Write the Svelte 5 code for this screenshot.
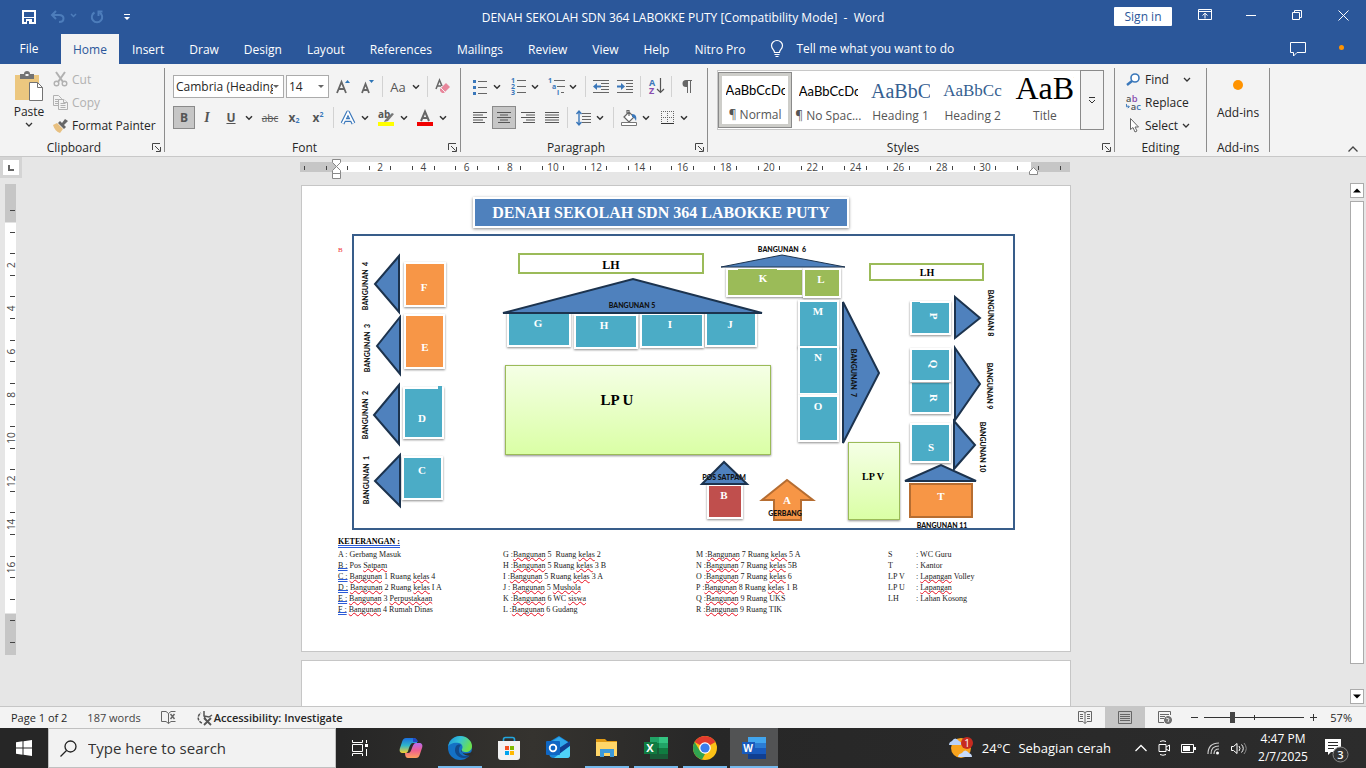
<script lang="ts">
    type Segment = { kind: string; text: string }
    type Building = {
        name: string
        x: number
        y: number
        w: number
        h: number
        fill: string
        lx: number
        ly: number
        turn?: boolean
    }

    const tabs = ['Home', 'Insert', 'Draw', 'Design', 'Layout', 'References', 'Mailings', 'Review', 'View', 'Help', 'Nitro Pro']
    let activeTab = $state('Home')
    let font = $state('Cambria (Headings)')
    let size = $state('14')
    let query = $state('')
    let zoom = $state(27)

    const styles = [
        { name: '¶ Normal', sample: 'AaBbCcDc', look: 'body' },
        { name: '¶ No Spac...', sample: 'AaBbCcDc', look: 'body' },
        { name: 'Heading 1', sample: 'AaBbCc', look: 'h-one' },
        { name: 'Heading 2', sample: 'AaBbCcD', look: 'h-two' },
        { name: 'Title', sample: 'AaBb', look: 'title' },
    ]
    let activeStyle = $state('¶ Normal')

    const teal = '#4bacc6'
    const orange = '#f79646'
    const green = '#9bbb59'

    const buildings: Building[] = [
        { name: 'F', x: 406, y: 264, w: 38, h: 41, fill: orange, lx: 424, ly: 291 },
        { name: 'E', x: 406, y: 316, w: 37, h: 51, fill: orange, lx: 425, ly: 351 },
        { name: 'D', x: 405, y: 389, w: 37, h: 48, fill: teal, lx: 422, ly: 422 },
        { name: 'C', x: 404, y: 458, w: 37, h: 40, fill: teal, lx: 422, ly: 474 },
        { name: 'G', x: 509, y: 314, w: 60, h: 31, fill: teal, lx: 538, ly: 327 },
        { name: 'H', x: 576, y: 316, w: 60, h: 31, fill: teal, lx: 604, ly: 329 },
        { name: 'I', x: 642, y: 315, w: 60, h: 31, fill: teal, lx: 670, ly: 328 },
        { name: 'J', x: 707, y: 314, w: 48, h: 31, fill: teal, lx: 730, ly: 328 },
        { name: 'K', x: 728, y: 270, w: 74, h: 25, fill: green, lx: 763, ly: 282 },
        { name: 'L', x: 805, y: 270, w: 34, h: 26, fill: green, lx: 821, ly: 283 },
        { name: 'M', x: 800, y: 302, w: 37, h: 44, fill: teal, lx: 818, ly: 315 },
        { name: 'N', x: 800, y: 348, w: 37, h: 45, fill: teal, lx: 818, ly: 361 },
        { name: 'O', x: 800, y: 397, w: 37, h: 43, fill: teal, lx: 818, ly: 410 },
        { name: 'P', x: 912, y: 303, w: 37, h: 30, fill: teal, lx: 930, ly: 316, turn: true },
        { name: 'R', x: 912, y: 383, w: 37, h: 29, fill: teal, lx: 930, ly: 398, turn: true },
        { name: 'Q', x: 912, y: 350, w: 37, h: 30, fill: teal, lx: 930, ly: 364, turn: true },
        { name: 'S', x: 912, y: 425, w: 37, h: 36, fill: teal, lx: 931, ly: 451 },
        { name: 'B', x: 709, y: 486, w: 32, h: 31, fill: '#c0504d', lx: 724, ly: 499 },
    ]

    const roofs = [
        '399,256 375,284 399,312',
        '400,317 377,346 400,374',
        '399,385 374,415 399,444',
        '400,455 375,481 400,506',
        '503,313 633,279 762,313',
        '843,302 879,373 843,443',
        '955,297 980,318 955,338',
        '955,348 980,384 955,420',
        '954,421 975,445 954,469',
        '905,481 941,465 976,481',
        '702,484 724,462 747,484',
    ]

    const labels = [
        { text: 'BANGUNAN  4', x: 366, y: 286, turn: -90 },
        { text: 'BANGUNAN  3', x: 368, y: 348, turn: -90 },
        { text: 'BANGUNAN  2', x: 366, y: 415, turn: -90 },
        { text: 'BANGUNAN  1', x: 367, y: 480, turn: -90 },
        { text: 'BANGUNAN 5', x: 632, y: 306, turn: 0 },
        { text: 'BANGUNAN  6', x: 782, y: 250, turn: 0 },
        { text: 'BANGUNAN  7', x: 853, y: 373, turn: 90 },
        { text: 'BANGUNAN 8', x: 990, y: 313, turn: 90 },
        { text: 'BANGUNAN 9', x: 989, y: 386, turn: 90 },
        { text: 'BANGUNAN 10', x: 982, y: 447, turn: 90 },
        { text: 'BANGUNAN 11', x: 942, y: 526, turn: 0 },
        { text: 'POS SATPAM', x: 724, y: 478, turn: 0 },
        { text: 'GERBANG', x: 785, y: 514, turn: 0 },
    ]

    // *word* is a spelling mark, _word_ is a grammar mark
    const legend = [
        [
            'A : Gerbang Masuk',
            '_B :_ Pos *Satpam*',
            '_C :_ *Bangunan* 1 Ruang *kelas* 4',
            '_D :_ *Bangunan* 2 Ruang *kelas* I A',
            '_E :_ *Bangunan* 3 *Perpustakaan*',
            '_F :_ *Bangunan* 4 Rumah Dinas',
        ],
        [
            'G :*Bangunan* 5  Ruang *kelas* 2',
            'H :*Bangunan* 5 Ruang *kelas* 3 B',
            'I :*Bangunan* 5 Ruang *kelas* 3 A',
            'J : *Bangunan* 5 *Mushola*',
            'K :*Bangunan* 6 WC *siswa*',
            'L :*Bangunan* 6 Gudang',
        ],
        [
            'M :*Bangunan* 7 Ruang *kelas* 5 A',
            'N :*Bangunan* 7 Ruang *kelas* 5B',
            'O :*Bangunan* 7 Ruang *kelas* 6',
            'P :*Bangunan* 8 Ruang *kelas* 1 B',
            'Q :*Bangunan* 9 Ruang UKS',
            'R :*Bangunan* 9 Ruang TIK',
        ],
        ['S\t: WC Guru', 'T\t: Kantor', 'LP V\t: *Lapangan* Volley', 'LP U\t: *Lapangan*', 'LH\t: Lahan Kosong'],
    ]

    function segments(line: string): Segment[] {
        return line
            .split(/(\*[^*]+\*|_[^_]+_)/)
            .filter(Boolean)
            .map((s) => {
                if (s[0] === '*') return { kind: 'typo', text: s.slice(1, -1) }
                if (s[0] === '_') return { kind: 'grammar', text: s.slice(1, -1) }
                return { kind: 'plain', text: s }
            })
    }

    const hTicks = Array.from({ length: 36 }, (_, i) => Math.round(4 + i * 21.6))
    const hNumbers = Array.from({ length: 15 }, (_, i) => ({ n: (i + 1) * 2, x: 37 + (i + 1) * 43.2 }))
    const vTicks = Array.from({ length: 21 }, (_, i) => Math.round(26 + i * 21.6))
    const vNumbers = Array.from({ length: 8 }, (_, i) => ({ n: (i + 1) * 2, y: 38 + (i + 1) * 43.2 }))
</script>

{#snippet chevron(label: string)}
    <button class="chev" aria-label={label}>
        <svg width="8" height="6" viewBox="0 0 8 6"><path d="M1 1.2 4 4.2 7 1.2" fill="none" stroke="#333" stroke-width="1.5" /></svg>
    </button>
{/snippet}

{#snippet launcher(label: string)}
    <button class="launcher" aria-label={label}>
        <svg width="9" height="9" viewBox="0 0 9 9" fill="none" stroke="#444"><path d="M.5 7V.5H8M3 3l4.5 4.5M8.5 4v4.500H4" /></svg>
    </button>
{/snippet}

<div class="window">
    <header class="titlebar">
        <div class="quick">
            <button aria-label="Save">
                <svg width="14" height="14" viewBox="0 0 14 14"><path d="M1 1h12v12H1z" fill="none" stroke="#fff" stroke-width="2" /><path d="M1 7h12v1H1zM4 9h6v5H4z" fill="#fff" /><path d="M5 11h2v3H5z" fill="#2b579a" /></svg>
            </button>
            <button aria-label="Undo">
                <svg width="26" height="14" viewBox="0 0 26 14" fill="none" stroke="#4d7dbb" stroke-width="2"><path d="M6 1 2 5l4 4M2 5h7c6 0 6 7 0 7" /><path d="m21 4 2.500 2.500L26 4" stroke-width="1.500" /></svg>
            </button>
            <button aria-label="Repeat">
                <svg width="14" height="14" viewBox="0 0 14 14" fill="none" stroke="#4d7dbb" stroke-width="2"><path d="M4.500 2.500a5.200 5.200 0 1 0 5 0" /><path d="M12.500 1.500H8.500V6" /></svg>
            </button>
            <button aria-label="Customize Quick Access Toolbar">
                <svg width="6" height="7" viewBox="0 0 6 7" fill="#fff"><path d="M0 0h6v1H0zM0 3h6L3 6z" /></svg>
            </button>
        </div>
        <div class="doc-name">DENAH SEKOLAH SDN 364 LABOKKE PUTY [Compatibility Mode]&nbsp; -&nbsp; Word</div>
        <div class="controls">
            <button class="signin">Sign in</button>
            <button class="win" aria-label="Ribbon display options">
                <svg width="14" height="12" viewBox="0 0 14 12" fill="none" stroke="#fff"><path d="M.5.5h13v10H.5zM.5 2.500h13M7 9.500V4.500M4.500 6.500 7 4.200l2.500 2.300" /></svg>
            </button>
            <button class="win" aria-label="Minimize">
                <svg width="10" height="10" viewBox="0 0 10 10"><path d="M0 5h10v1H0z" fill="#fff" /></svg>
            </button>
            <button class="win" aria-label="Restore">
                <svg width="10" height="10" viewBox="0 0 10 10" fill="none" stroke="#fff"><path d="M.5 2.500h7v7h-7zM2.500 2V.5h7v7H8" /></svg>
            </button>
            <button class="win" aria-label="Close">
                <svg width="11" height="11" viewBox="0 0 11 11" stroke="#fff"><path d="m.5.5 10 10M10.500.5l-10 10" /></svg>
            </button>
        </div>
    </header>

    <nav class="tabs">
        <button class="file">File</button>
        {#each tabs as tab}
            <button class:active={activeTab === tab} onclick={() => (activeTab = tab)}>{tab}</button>
        {/each}
        <button class="tell">
            <svg width="14" height="18" viewBox="0 0 14 18" fill="none" stroke="#fff" stroke-width="1.200"><path d="M4.500 12.500c0-3-3-3.500-3-7a5.500 5 0 0 1 11 0c0 3.500-3 4-3 7zM4.500 14.500h5M5.500 16.500h3" /></svg>
            Tell me what you want to do
        </button>
        <button class="comments" aria-label="Comments">
            <svg width="16" height="15" viewBox="0 0 16 15" fill="none" stroke="#fff"><path d="M.5.5h15v10H7L3.500 14v-3.500h-3z" /></svg>
        </button>
        <span class="notice"></span>
    </nav>

    <section class="ribbon">
        <div class="group clipboard">
            <div class="tools split">
                <button class="paste">
                    <svg width="28" height="31" viewBox="0 0 28 31"><path d="M0 4h24v25H0z" fill="#ecc77f" /><path d="M5 3h4a3 3 0 0 1 6 0h4v5H5z" fill="#737373" /><path d="M10.500 3h3v2h-3z" fill="#f3f3f3" /><path d="M14.500 11.500h8l5 5v13h-13z" fill="#fff" stroke="#737373" /><path d="M22.500 11.500v5h5" fill="none" stroke="#737373" /></svg>
                    Paste
                    <svg width="8" height="6" viewBox="0 0 8 6"><path d="m1 1 3 3 3-3" fill="none" stroke="#333" stroke-width="1.300" /></svg>
                </button>
                <div class="stack">
                    <button class="small off">
                        <svg width="15" height="15" viewBox="0 0 15 15" fill="none" stroke="#b1b1b1" stroke-width="2"><path d="m3 0 7 10M12 0 5 10" /><circle cx="3.500" cy="11.500" r="2.300" stroke-width="1.400" /><circle cx="11.500" cy="11.500" r="2.300" stroke-width="1.400" /></svg>Cut
                    </button>
                    <button class="small off">
                        <svg width="15" height="15" viewBox="0 0 15 15" fill="#f3f3f3" stroke="#b1b1b1"><path d="M.5.500h5l3 3v7h-8z" /><path d="M2 4.500h4M2 6.500h3M2 8.500h3" /><path d="M5.500 4.500h5l4 3v7h-9z" /><path d="M7.500 8.500h5M7.500 10.500h5M7.500 12.500h5M10.500 4.500v3h4" /></svg>Copy
                    </button>
                    <button class="small">
                        <svg width="15" height="14" viewBox="0 0 15 14"><path d="m0 6 4-2 6 6-3 4c-3-1-6-4-7-8z" fill="#e8c080" /><path d="m5 4 2-2 2 2 3-4 3 2-4 4 2 2-2 2z" fill="#666" /></svg>Format Painter
                    </button>
                </div>
            </div>
            <div class="caption">Clipboard</div>
            {@render launcher('Clipboard settings')}
        </div>

        <div class="group font">
            <div class="tools rows">
                <div class="row">
                    <span class="combo name">
                        <select aria-label="Font" bind:value={font}>
                            <option>Cambria (Headings)</option>
                            <option>Calibri</option>
                        </select>
                    </span>
                    <span class="combo size">
                        <select aria-label="Font size" bind:value={size}>
                            <option>12</option>
                            <option>14</option>
                            <option>16</option>
                        </select>
                    </span>
                    <button class="tool" aria-label="Increase font size">
                        <svg width="14" height="15" viewBox="0 0 14 15"><path d="M1 14 5.500 3 10 14M2.500 10h6" fill="none" stroke="#666" stroke-width="1.800" /><path d="M9 4h5l-2.500-3z" fill="#2e75b6" /></svg>
                    </button>
                    <button class="tool" aria-label="Decrease font size">
                        <svg width="14" height="15" viewBox="0 0 14 15"><path d="M2 14 5.500 5 9 14M3 11h5" fill="none" stroke="#666" stroke-width="1.800" /><path d="M9 1h5l-2.500 3z" fill="#2e75b6" /></svg>
                    </button>
                    <i class="bar"></i>
                    <button class="tool case">Aa</button>
                    {@render chevron('Change case')}
                    <i class="bar late"></i>
                    <button class="tool" aria-label="Clear formatting">
                        <svg width="16" height="16" viewBox="0 0 16 16"><path d="M1 10 4.500 1 7 7M2.500 7H6" fill="none" stroke="#666" stroke-width="1.500" /><path d="m5 10 6-6 4 4-6 6H7l-2-2z" fill="#e8879c" /><path d="m6 9 4 4" stroke="#f3f3f3" /></svg>
                    </button>
                </div>
                <div class="row">
                    <button class="tool on bold">B</button>
                    <button class="tool italic">I</button>
                    <button class="tool under">U</button>
                    {@render chevron('Underline options')}
                    <button class="tool strike">abc</button>
                    <button class="tool script">x<sub>2</sub></button>
                    <button class="tool script">x<sup>2</sup></button>
                    <i class="bar"></i>
                    <button class="tool tight" aria-label="Text effects">
                        <svg width="16" height="16" viewBox="0 0 16 16"><path d="M2.500 13.500 8 2.500 13.500 13.500M4.500 10h7" fill="none" stroke="#3a77ba" stroke-width="4" stroke-linejoin="round" /><path d="M2.500 13.500 8 2.500 13.500 13.500M4.500 10h7" fill="none" stroke="#fff" stroke-width="1.700" /></svg>
                    </button>
                    {@render chevron('Text effect options')}
                    <button class="tool" aria-label="Text highlight color">
                        <svg width="16" height="16" viewBox="0 0 16 16"><text x="0" y="8" font-size="10" font-weight="700" fill="#555">ab</text><path d="m7 10 7-7 2 1-6 7-4 1z" fill="#777" /><path d="M0 12h16v4H0z" fill="#ff0" /></svg>
                    </button>
                    {@render chevron('Highlight colors')}
                    <button class="tool" aria-label="Font color">
                        <svg width="16" height="16" viewBox="0 0 16 16"><path d="M4 11 8 1.500 12 11M5.500 8h5" fill="none" stroke="#666" stroke-width="2" /><path d="M0 12h16v4H0z" fill="#f00000" /></svg>
                    </button>
                    {@render chevron('Font colors')}
                </div>
            </div>
            <div class="caption">Font</div>
            {@render launcher('Font settings')}
        </div>

        <div class="group paragraph">
            <div class="tools rows">
                <div class="row">
                    <button class="tool" aria-label="Bullets">
                        <svg width="14" height="16" viewBox="0 0 14 16"><path d="M5 2.500h9M5 8.500h9M5 14.500h9" stroke="#666" /><path d="M0 1h3v3H0zM0 7h3v3H0zM0 13h3v3H0z" fill="#3a77ba" /></svg>
                    </button>
                    {@render chevron('Bullet library')}
                    <button class="tool" aria-label="Numbering">
                        <svg width="15" height="17" viewBox="0 0 15 17"><path d="M6 2.500h9M6 8.500h9M6 14.500h9" stroke="#666" /><g font-size="7" font-weight="700" fill="#3a77ba"><text x="0" y="5">1</text><text x="0" y="11">2</text><text x="0" y="17">3</text></g></svg>
                    </button>
                    {@render chevron('Numbering library')}
                    <button class="tool" aria-label="Multilevel list">
                        <svg width="17" height="17" viewBox="0 0 17 17"><path d="M6 2.500h11M9 8.500h8M13 14.500h3" stroke="#666" /><g font-size="7" font-weight="700" fill="#3a77ba"><text x="0" y="5">1</text><text x="4" y="11">a</text><text x="9" y="17">i</text></g></svg>
                    </button>
                    {@render chevron('List library')}
                    <i class="bar"></i>
                    <button class="tool" aria-label="Decrease indent">
                        <svg width="16" height="13" viewBox="0 0 16 13"><path d="M0 .5h16M8 3.500h8M8 6.500h8M8 9.500h8M0 12.500h16" stroke="#666" /><path d="M0 6.500 4 3v2.500h4v2H4V10z" fill="#3a77ba" /></svg>
                    </button>
                    <button class="tool" aria-label="Increase indent">
                        <svg width="16" height="13" viewBox="0 0 16 13"><path d="M0 .5h16M9 3.500h7M9 6.500h7M9 9.500h7M0 12.500h16" stroke="#666" /><path d="M8 6.500 4 3v2.500H0v2h4V10z" fill="#3a77ba" /></svg>
                    </button>
                    <i class="bar"></i>
                    <button class="tool" aria-label="Sort">
                        <svg width="15" height="17" viewBox="0 0 15 17"><g font-size="9" font-weight="700"><text x="0" y="8" fill="#3a77ba">A</text><text x="0" y="16" fill="#8a4fb0">Z</text></g><path d="M11.500 0v14M8 11l3.500 3.500L15 11" fill="none" stroke="#555" stroke-width="1.200" /></svg>
                    </button>
                    <i class="bar"></i>
                    <button class="tool" aria-label="Show formatting marks">
                        <svg width="10" height="13" viewBox="0 0 10 13" fill="#666"><path d="M5 0H4a3.500 3.500 0 0 0 0 7h1v6h1V1h2v12h1V1h1V0z" /></svg>
                    </button>
                </div>
                <div class="row">
                    <button class="tool" aria-label="Align left">
                        <svg width="14" height="11" viewBox="0 0 14 11" stroke="#555"><path d="M0 .5h14M0 3h10M0 5.500h14M0 8h10M0 10.500h12" /></svg>
                    </button>
                    <button class="tool on" aria-label="Center">
                        <svg width="14" height="11" viewBox="0 0 14 11" stroke="#555"><path d="M0 .5h14M3 3h8M0 5.500h14M3 8h8M1 10.500h12" /></svg>
                    </button>
                    <button class="tool" aria-label="Align right">
                        <svg width="14" height="11" viewBox="0 0 14 11" stroke="#555"><path d="M0 .5h14M5 3h9M0 5.500h14M5 8h9M2 10.500h12" /></svg>
                    </button>
                    <button class="tool" aria-label="Justify">
                        <svg width="14" height="11" viewBox="0 0 14 11" stroke="#555"><path d="M0 .5h14M0 3h14M0 5.500h14M0 8h14M0 10.500h14" /></svg>
                    </button>
                    <i class="bar"></i>
                    <button class="tool" aria-label="Line spacing">
                        <svg width="15" height="16" viewBox="0 0 15 16"><path d="M6 3.500h9M6 6.500h9M6 9.500h9M6 12.500h9" stroke="#666" /><path d="M3 1v14M.5 4 3 1l2.500 3M.5 12 3 15l2.500-3" fill="none" stroke="#3a77ba" stroke-width="1.400" /></svg>
                    </button>
                    {@render chevron('Line spacing options')}
                    <i class="bar wide"></i>
                    <button class="tool" aria-label="Shading">
                        <svg width="16" height="16" viewBox="0 0 16 16"><path d="m3 7 5-5 5 5-5 5zM6 4V.5h2V6" fill="#fff" stroke="#666" stroke-width="1.200" /><path d="M11 4c4 0 5 3 4 7-1-2-2-4-4-4z" fill="#3a77ba" /><path d="M.5 12.500h15v3H.5z" fill="#fff" stroke="#777" /></svg>
                    </button>
                    {@render chevron('Shading colors')}
                    <button class="tool" aria-label="Borders">
                        <svg width="13" height="13" viewBox="0 0 13 13"><path d="M.5 0v12M6.500 0v12M12.500 0v12M0 .5h13M0 6.500h13" stroke="#666" stroke-dasharray="1 1" /><path d="M0 12.500h13" stroke="#333" /></svg>
                    </button>
                    {@render chevron('Border options')}
                </div>
            </div>
            <div class="caption">Paragraph</div>
            {@render launcher('Paragraph settings')}
        </div>

        <div class="group styles">
            <div class="gallery">
                {#each styles as style}
                    <button class="style" class:picked={activeStyle === style.name} onclick={() => (activeStyle = style.name)}>
                        <span class="sample {style.look}">{style.sample}</span>
                        <span class="style-name">{style.name}</span>
                    </button>
                {/each}
                <button class="more" aria-label="More styles">
                    <svg width="8" height="7" viewBox="0 0 8 7" fill="none" stroke="#333"><path d="M1 .5h6M1 3l3 3 3-3" /></svg>
                </button>
            </div>
            <div class="caption">Styles</div>
            {@render launcher('Styles settings')}
        </div>

        <div class="group editing">
            <div class="stack">
                <button class="small">
                    <svg width="15" height="14" viewBox="0 0 15 14"><circle cx="9" cy="5" r="4" fill="#fff" stroke="#3a77ba" stroke-width="1.600" /><path d="m6 8-5 4" stroke="#3a77ba" stroke-width="2.500" /></svg>Find
                    <svg class="far" width="8" height="6" viewBox="0 0 8 6"><path d="m1 1 3 3 3-3" fill="none" stroke="#333" stroke-width="1.300" /></svg>
                </button>
                <button class="small">
                    <svg width="15" height="16" viewBox="0 0 16 16" font-size="10" font-weight="600"><text x="0" y="7" fill="#555">a</text><text x="6" y="7" fill="#8a4fb0">b</text><text x="5" y="15" fill="#555">a</text><text x="11" y="15" fill="#3a77ba">c</text><path d="M.5 9v3h3M2 10.500 3.500 12 2 13.500" fill="none" stroke="#3a77ba" /></svg>Replace
                </button>
                <button class="small">
                    <svg width="15" height="15" viewBox="0 0 15 15" fill="#fff" stroke="#666"><path d="M4.500.5v11l2.500-2 2 4.500 2-1-2-4h3.500z" /></svg>Select
                    <svg width="8" height="6" viewBox="0 0 8 6"><path d="m1 1 3 3 3-3" fill="none" stroke="#333" stroke-width="1.300" /></svg>
                </button>
            </div>
            <div class="caption">Editing</div>
        </div>

        <div class="group addins">
            <button class="addin"><span class="dot"></span>Add-ins</button>
            <div class="caption">Add-ins</div>
        </div>
        <button class="collapse" aria-label="Collapse the ribbon">
            <svg width="10" height="6" viewBox="0 0 10 6"><path d="m.5 5.500 4.500-4.500 4.500 4.500" fill="none" stroke="#444" stroke-width="1.300" /></svg>
        </button>
    </section>

    <main class="workspace">
        <div class="left-rail">
            <button class="tab-stop" aria-label="Tab stop">
                <svg width="6" height="6" viewBox="0 0 6 6"><path d="M1 0v5h5" fill="none" stroke="#666" stroke-width="2" /></svg>
            </button>
            <svg class="v-ruler" width="11" height="471" viewBox="0 0 11 471">
                <path d="M0 0h11v471H0z" fill="#c6c6c6" />
                <path d="M0 38.500h11v391H0z" fill="#fff" />
                {#each vTicks as y}
                    <path d="M5 {y}.5h5" stroke="#444" />
                {/each}
                {#each vNumbers as mark}
                    <text transform="translate(10 {mark.y}) rotate(-90)" text-anchor="middle">{mark.n}</text>
                {/each}
            </svg>
        </div>

        <div class="canvas">
            <svg class="h-ruler" width="770" height="20" viewBox="0 0 770 20">
                <path d="M0 3h770v10H0z" fill="#c6c6c6" />
                <path d="M37 3h694v10H37z" fill="#fff" />
                {#each hTicks as x}
                    <path d="M{x}.5 7v4" stroke="#444" />
                {/each}
                {#each hNumbers as mark}
                    <text x={mark.x} y="12" text-anchor="middle">{mark.n}</text>
                {/each}
                <g fill="#fff" stroke="#888"><path d="M32.500.5h8v3l-4 4-4-4zM32.500 14.500v-3l4-4 4 4v3zM32.500 14.500h8v5h-8zM729.500 15.500v-3l4-4 4 4v3z" /></g>
            </svg>

            <article class="page">
                <h1>DENAH SEKOLAH SDN 364 LABOKKE PUTY</h1>
                <svg class="plan" viewBox="302 230 768 301">
                    <defs>
                        <linearGradient id="lawn" x1="0" y1="0" x2="0" y2="1">
                            <stop offset="0" stop-color="#f5ffe6" />
                            <stop offset="1" stop-color="#daffa5" />
                        </linearGradient>
                        <filter id="shade" x="-10%" y="-10%" width="120%" height="125%">
                            <feDropShadow dx="0" dy="1" stdDeviation="1" flood-opacity="0.45" />
                        </filter>
                    </defs>
                    <text class="mark" x="338" y="252">B</text>
                    <rect x="353" y="235" width="661" height="294" fill="none" stroke="#385d8a" stroke-width="2" />

                    <rect x="519" y="254" width="184" height="19" fill="#fff" stroke={green} stroke-width="2" />
                    <rect x="870" y="264" width="113" height="16" fill="#fff" stroke={green} stroke-width="2" />
                    <rect x="505.500" y="365.500" width="265" height="89" fill="url(#lawn)" stroke={green} filter="url(#shade)" />
                    <rect x="848.500" y="442.500" width="51" height="77" fill="url(#lawn)" stroke={green} filter="url(#shade)" />
                    <g class="area">
                        <text x="611" y="269" font-size="12">LH</text>
                        <text x="927" y="276" font-size="10">LH</text>
                        <text x="617" y="405" font-size="15">LP U</text>
                        <text x="873" y="480" font-size="10">LP V</text>
                    </g>

                    {#each buildings as b}
                        <rect x={b.x - 1} y={b.y - 1} width={b.w + 2} height={b.h + 2} fill={b.fill} stroke="#fff" stroke-width="2" filter="url(#shade)" />
                    {/each}
                    <path d="M438 386h4v4h-4z" fill={teal} />
                    <path d="M738 269h39v1h-39z" fill={green} />
                    <path d="M912 302h8v1h-8z" fill={teal} />
                    <rect x="910" y="484" width="62" height="33" fill={orange} stroke="#b66d31" stroke-width="2" />
                    <path d="M762 500 787 480l26 20h-12v20h-27v-20z" fill={orange} stroke="#b66d31" stroke-width="2" />

                    {#each roofs as points}
                        <polygon {points} fill="#4f81bd" stroke="#1c334e" stroke-width="2" />
                    {/each}
                    <polygon points="721,267 782,255 845,267" fill="#4f81bd" stroke="#1c334e" />

                    <g class="letter">
                        {#each buildings as b}
                            <text transform="translate({b.lx} {b.ly}) rotate({b.turn ? 90 : 0})">{b.name}</text>
                        {/each}
                        <text x="787" y="504">A</text>
                        <text x="941" y="500">T</text>
                    </g>
                    <g class="label">
                        {#each labels as l}
                            <text transform="translate({l.x} {l.y}) rotate({l.turn})" dy="2">{l.text}</text>
                        {/each}
                    </g>
                </svg>

                <h2>KETERANGAN :</h2>
                <div class="legend">
                    {#each legend as column}
                        <ul>
                            {#each column as line}
                                <li>{#each segments(line) as s}<span class={s.kind}>{s.text}</span>{/each}</li>
                            {/each}
                        </ul>
                    {/each}
                </div>
            </article>
            <article class="page next"></article>
        </div>

        <div class="scrollbar">
            <button aria-label="Scroll up"><svg width="8" height="5" viewBox="0 0 8 5"><path d="m0 4.500 4-4 4 4z" /></svg></button>
            <div class="thumb"></div>
            <button aria-label="Scroll down"><svg width="8" height="5" viewBox="0 0 8 5"><path d="M0 .5h8l-4 4z" /></svg></button>
        </div>
    </main>

    <footer class="status">
        <button>Page 1 of 2</button>
        <button class="dim">187 words</button>
        <button aria-label="Proofing errors">
            <svg width="15" height="13" viewBox="0 0 15 13" fill="none" stroke="#666"><path d="M7.500 2.500v10M7.500 2.500 5 .5H.5v10H5l2.500 2 2.500-2h4.500M7.500 2.500 10 .5h4.500" /><path d="m9.500 3 4 5M13.500 3l-4 5" stroke-width="1.500" /></svg>
        </button>
        <button class="access">
            <svg width="17" height="16" viewBox="0 0 17 16" fill="none" stroke="#555" stroke-width="1.500"><path d="M6 13a5.500 5.500 0 0 1-1-10" stroke-dasharray="3 1" /><path d="M8 1v5l5 1 3-2M8 6l2 4" /><path d="m8 8 7 7M15 8l-7 7" stroke-width="1.800" /></svg>Accessibility: Investigate
        </button>
        <div class="views">
            <button aria-label="Read mode">
                <svg width="14" height="13" viewBox="0 0 14 13" fill="none" stroke="#666"><path d="M7 1.500 5 .5H.5v10H5l2 2 2-2h4.500V.5H9zM7 1.500v11M2 3.500h3M2 5.500h3M2 7.500h3M9 3.500h3M9 5.500h3M9 7.500h3" /></svg>
            </button>
            <button class="on" aria-label="Print layout">
                <svg width="14" height="13" viewBox="0 0 14 13" fill="none" stroke="#666"><path d="M.5.5h13v12H.5zM2 3.500h10M2 5.500h10M2 7.500h10M2 9.500h10" /></svg>
            </button>
            <button aria-label="Web layout">
                <svg width="14" height="13" viewBox="0 0 14 13" fill="none" stroke="#666"><path d="M12.500 4V.5H.5v11H6M2 3.500h9M2 5.500h5M2 7.500h4" /><circle cx="10" cy="9" r="3.500" fill="#777" /><path d="m8 7 3 1-1 3" stroke="#ddd" /></svg>
            </button>
        </div>
        <div class="zoom">
            <button class="step" aria-label="Zoom out">
                <svg width="9" height="9" viewBox="0 0 9 9" stroke="#333"><path d="M1 4.500h7" /></svg>
            </button>
            <input type="range" aria-label="Zoom" min="0" max="100" bind:value={zoom} />
            <button class="step" aria-label="Zoom in">
                <svg width="9" height="9" viewBox="0 0 9 9" stroke="#333"><path d="M1 4.500h7M4.500 1v7" /></svg>
            </button>
            <button class="percent">57%</button>
        </div>
    </footer>

    <div class="taskbar">
        <button class="start" aria-label="Start">
            <svg width="16" height="16" viewBox="0 0 16 16" fill="#fff"><path d="M0 2.300 6.500 1.300v6.200H0zM7.500 1.200 16 0v7.500H7.500zM0 8.500h6.500v6.200L0 13.700zM7.500 8.500H16V16l-8.500-1.200z" /></svg>
        </button>
        <label class="search">
            <svg width="17" height="17" viewBox="0 0 17 17" fill="none" stroke="#222" stroke-width="1.300"><circle cx="10.500" cy="6.500" r="5.500" /><path d="M6.500 10.500.5 16.500" /></svg>
            <input type="text" placeholder="Type here to search" bind:value={query} />
        </label>
        <button class="app" aria-label="Task view">
            <svg width="16" height="16" viewBox="0 0 16 16" fill="none" stroke="#fff"><path d="M.5 0v2.500h10V0M.5 16v-2.500h10V16M.5 4.500h10v7H.5zM14.500 0v3M14.500 9v7" /><path d="M13 4h3v3h-3z" fill="#fff" stroke="none" /></svg>
        </button>
        <div class="pinned">
            <button class="app" aria-label="Copilot">
                <svg width="24" height="22" viewBox="0 0 24 22">
                    <defs>
                        <linearGradient id="cpA" x1="0" y1="0" x2="0" y2="1"><stop offset="0" stop-color="#1b6fe0" /><stop offset=".5" stop-color="#2fb5c9" /><stop offset="1" stop-color="#f5cf2e" /></linearGradient>
                        <linearGradient id="cpB" x1="0" y1="0" x2="0" y2="1"><stop offset="0" stop-color="#b66bf0" /><stop offset=".5" stop-color="#f0608e" /><stop offset="1" stop-color="#ffa05c" /></linearGradient>
                    </defs>
                    <path d="M7 1h8c2 0 3 2 3 5h-4c-2 0-3 2-4 5s-1 5-4 5H4c-3 0-4-2-3-5l2-6c1-3 2-4 4-4z" fill="url(#cpA)" />
                    <path d="M14 1c3 0 4 1 5 4h-5z" fill="#2247c4" />
                    <path d="M17 21H9c-2 0-3-2-3-5h3c2 0 3-2 4-5s2-5 4-5h3c3 0 4 2 3 5l-2 6c-1 3-2 4-4 4z" fill="url(#cpB)" />
                </svg>
            </button>
            <button class="app open" aria-label="Edge">
                <svg width="24" height="24" viewBox="0 0 24 24">
                    <defs>
                        <linearGradient id="edge" x1="0" y1="0" x2="1" y2=".4"><stop offset="0" stop-color="#1b8fd8" /><stop offset=".5" stop-color="#36c3d6" /><stop offset="1" stop-color="#6be04f" /></linearGradient>
                    </defs>
                    <circle cx="12" cy="12" r="12" fill="#1471c4" />
                    <path d="M0 11C1 4 6 0 12 0c7 0 12 5 12 10 0 4-3 6-6 6-3 0-5-1-4-3 1-1 1-5-3-6-5-1-10 1-11 4z" fill="url(#edge)" />
                    <path d="M8 10c-3 6 1 12 8 12 3 0 5-1 6-3-7 3-12-1-11-6 0-2 1-3 2-4-2-1-4 0-5 1z" fill="#114a8b" />
                    <path d="M13.500 13.500c-1 2 1 4 5 4 2 0 4-1 6-2l1 3-2.500 1c-5 1-9.500-2-9.500-6z" fill="#2e2d2b" />
                </svg>
            </button>
            <button class="app" aria-label="Store">
                <svg width="24" height="24" viewBox="0 0 24 24"><path d="M6.500 6V3.500q0-2 2-2h7q2 0 2 2V6" fill="none" stroke="#22a6df" stroke-width="1.600" /><path d="M1 5h22v16q0 3-3 3H4q-3 0-3-3z" fill="#f2f2f2" /><path d="M8 10h4v4H8z" fill="#f25022" /><path d="M13 10h4v4h-4z" fill="#7fba00" /><path d="M8 15h4v4H8z" fill="#00a4ef" /><path d="M13 15h4v4h-4z" fill="#ffb900" /></svg>
            </button>
            <button class="app" aria-label="Outlook">
                <svg width="24" height="24" viewBox="0 0 24 24"><path d="m3 6 10-6 11 7v12q0 3-3 3H8q-5 0-5-5z" fill="#1686d9" /><path d="m5 6 8-5 10 6-10 8z" fill="#2fa8ec" /><path d="m10 14 14-9v5L12 19z" fill="#103f91" /><path d="M24 10v9q0 3-3 3H8z" fill="#4fd2f7" /><rect y="5" width="14" height="14" rx="1" fill="#0f67c4" /><circle cx="7" cy="12" r="3.300" fill="none" stroke="#fff" stroke-width="1.800" /></svg>
            </button>
            <button class="app open" aria-label="File Explorer">
                <svg width="24" height="22" viewBox="0 0 24 22"><path d="M1 2h9l2 2h10v5H1z" fill="#e09a14" /><path d="M1 5h21v14H1z" fill="#ffd668" /><path d="M5 12h14v8h-4v-4H9v4H5z" fill="#3d9ad9" /></svg>
            </button>
            <button class="app open" aria-label="Excel">
                <svg width="24" height="22" viewBox="0 0 24 22"><path d="M6 0h9v6H6z" fill="#21a366" /><path d="M15 0h9v6h-9z" fill="#33c481" /><path d="M6 6h9v5H6z" fill="#107c41" /><path d="M15 6h9v5h-9z" fill="#21a366" /><path d="M6 11h18v11H6z" fill="#185c37" /><path d="M15 11h9v6h-9z" fill="#107c41" /><path d="M0 5h13v12H0z" fill="#107c41" /><text x="6" y="15" text-anchor="middle" font-size="11" font-weight="700" fill="#fff">X</text></svg>
            </button>
            <button class="app open" aria-label="Chrome">
                <svg width="24" height="24" viewBox="0 0 24 24"><circle cx="12" cy="12" r="12" fill="#fbc116" /><path d="M12 12 1.600 6a12 12 0 0 1 20.800 0z" fill="#e33b2e" /><path d="M1.600 6 7 15l5 3-3 5.600A12 12 0 0 1 1.600 6z" fill="#31a350" /><circle cx="12" cy="12" r="5.800" fill="#fff" /><circle cx="12" cy="12" r="4.600" fill="#3b7ded" /></svg>
            </button>
            <button class="app open current" aria-label="Word">
                <svg width="24" height="22" viewBox="0 0 24 22"><path d="M6 0h18v6H6z" fill="#41a5ee" /><path d="M6 6h18v5H6z" fill="#2b7cd3" /><path d="M6 11h18v6H6z" fill="#185abd" /><path d="M6 17h18v5H6z" fill="#103f91" /><path d="M0 5h13v12H0z" fill="#185abd" /><text x="6" y="15" text-anchor="middle" font-size="10" font-weight="700" fill="#fff">W</text></svg>
            </button>
        </div>

        <div class="tray">
            <button class="weather">
                <svg width="26" height="24" viewBox="0 0 26 24"><circle cx="13" cy="12" r="10" fill="#f7a21c" /><path d="M1 9q0-3 3-4 3-5 7 0 3 1 2 4z" fill="#b9d2f8" /><path d="M10 21q0-3 4-4 3-5 7 0 3 1 3 4z" fill="#c6dafa" /><circle cx="19" cy="7" r="6" fill="#c72b20" /><text x="19" y="11" text-anchor="middle" font-size="10" fill="#fff">1</text></svg>
                <span>24°C</span><span>Sebagian cerah</span>
            </button>
            <button aria-label="Show hidden icons">
                <svg width="12" height="8" viewBox="0 0 12 8" fill="none" stroke="#fff" stroke-width="1.300"><path d="m.5 7 5.500-5.500L11.500 7" /></svg>
            </button>
            <button aria-label="Meet now">
                <svg width="12" height="16" viewBox="0 0 12 16" fill="none" stroke="#fff"><path d="M1 4.500h7v7H1zM8 7l3.500-2v6L8 9M2 1.500Q5 0 8 1.500M2 14.500q3 1.500 6 0" /></svg>
            </button>
            <button aria-label="Battery">
                <svg width="15" height="9" viewBox="0 0 15 9"><path d="M.5.500h12v8H.500z" fill="none" stroke="#fff" /><path d="M2 2h7v5H2zM13 3h2v3h-2z" fill="#fff" /></svg>
            </button>
            <button aria-label="Network">
                <svg width="13" height="13" viewBox="0 0 13 13" fill="none" stroke="#ccc" stroke-width="1.200"><path d="M1 12Q1 1 12 1M4 12q0-8 8-8M7 12q0-5 5-5" /><circle cx="10.500" cy="11" r="1.500" fill="#fff" stroke="none" /></svg>
            </button>
            <button aria-label="Volume">
                <svg width="16" height="13" viewBox="0 0 16 13" fill="none" stroke="#fff"><path d="M.5 4.500h2L6 1.500v10l-3.500-3h-2zM8 4q2 2.500 0 5M10.500 2.500q3.500 4 0 8" /><path d="M13 1q4.500 5.500 0 11" stroke="#888" /></svg>
            </button>
            <button class="clock"><span>4:47 PM</span><span>2/7/2025</span></button>
            <button class="alerts" aria-label="Notifications">
                <svg width="24" height="24" viewBox="0 0 24 24"><path d="M0 0h16v13H6l-3 3v-3H0z" fill="#fff" /><path d="M3 3.500h10M3 6.500h10M3 9.500h6" stroke="#2b2b2b" /><circle cx="15.500" cy="15.500" r="7.500" fill="#333" stroke="#888" /><text x="15.500" y="19.500" text-anchor="middle" font-size="11" font-weight="600" fill="#fff">3</text></svg>
            </button>
        </div>
    </div>
</div>

<style>
    :global(body) {
        margin: 0;
    }

    .window {
        display: flex;
        flex-direction: column;
        height: 100vh;
        overflow: hidden;
        background: #e6e6e6;
        color: #262626;
        font: 12px/16px 'Open Sans', 'Noto Sans', sans-serif;
    }

    button {
        display: flex;
        align-items: center;
        justify-content: center;
        flex: none;
        margin: 0;
        padding: 0;
        border: 0;
        background: none;
        color: inherit;
        font: inherit;
        white-space: nowrap;
    }

    svg {
        display: block;
        flex: none;
        overflow: visible;
    }

    .titlebar {
        display: grid;
        grid-template-columns: 1fr auto 1fr;
        align-items: center;
        height: 34px;
        flex: none;
        background: #2b579a;
        color: #fff;
    }

    .doc-name {
        padding-top: 2px;
    }

    .quick {
        display: flex;
        align-items: center;
        gap: 14px;
        padding-left: 22px;
    }

    .quick button:last-child {
        padding-left: 6px;
    }

    .controls {
        display: flex;
        align-items: flex-start;
        justify-content: flex-end;
        align-self: start;
    }

    .signin {
        width: 58px;
        height: 19px;
        margin: 7px 10px 0 0;
        border-radius: 1px;
        background: #fff;
        color: #2b579a;
    }

    .win {
        width: 46px;
        height: 30px;
    }

    .tabs {
        display: flex;
        gap: 1px;
        height: 30px;
        flex: none;
        background: #2b579a;
        color: #fff;
    }

    .tabs button {
        padding: 2px 12px 0;
    }

    .tabs .file {
        width: 60px;
        padding: 0 2px 0 0;
    }

    .tabs .active {
        background: #f3f3f3;
        color: #2b579a;
    }

    .tabs .tell {
        gap: 12px;
        padding-top: 0;
    }

    .tabs .comments {
        margin-left: auto;
        padding-top: 0;
    }

    .notice {
        width: 5px;
        height: 5px;
        margin: 11px 22px 0 20px;
        border-radius: 50%;
        background: #ff9300;
    }

    .ribbon {
        display: flex;
        height: 92px;
        flex: none;
        border-bottom: 1px solid #c8c8c8;
        background: #f3f3f3;
    }

    .group {
        position: relative;
        display: flex;
        flex-direction: column;
        justify-content: space-between;
        box-sizing: border-box;
        flex: none;
        margin: 4px 0;
        border-right: 1px solid #8c8c8c;
    }

    .caption {
        height: 12px;
        line-height: 16px;
        text-align: center;
    }

    .clipboard .caption,
    .font .caption,
    .paragraph .caption,
    .styles .caption {
        padding-right: 16px;
    }

    .launcher {
        position: absolute;
        right: 3px;
        bottom: 0;
    }

    .clipboard {
        width: 165px;
    }

    .font {
        width: 296px;
    }

    .paragraph {
        width: 247px;
    }

    .styles {
        width: 407px;
    }

    .editing {
        width: 92px;
    }

    .addins {
        width: 63px;
    }

    .split {
        display: flex;
    }

    .paste {
        flex-direction: column;
        align-self: flex-start;
        gap: 2px;
        width: 50px;
        padding: 3px 0 0 8px;
    }

    .stack {
        display: flex;
        flex-direction: column;
    }

    .small {
        justify-content: flex-start;
        gap: 4px;
        height: 23px;
        padding-left: 3px;
    }

    .off {
        color: #b1b1b1;
    }

    .editing .stack {
        padding-left: 8px;
    }

    .small .far {
        margin-left: 10px;
    }

    .rows {
        display: flex;
        flex-direction: column;
        gap: 8px;
        padding: 7px 0 0 7px;
    }

    .font .rows {
        padding-left: 8px;
    }

    .row {
        display: flex;
        align-items: center;
        height: 23px;
    }

    .tool {
        width: 24px;
        height: 23px;
        color: #555;
    }

    .tool.tight {
        width: 22px;
    }

    .tool.on {
        box-sizing: border-box;
        border: 1px solid #8a8a8a;
        background: #c6c6c6;
    }

    .chev {
        width: 10px;
        height: 23px;
        margin-right: 4px;
    }

    .font .chev {
        width: 12px;
        margin-right: 3px;
    }

    .bar {
        width: 1px;
        height: 21px;
        flex: none;
        margin: 0 3px;
        background: #d2d2d2;
    }

    .bar.late {
        margin-left: 2px;
    }

    .bar.wide {
        margin-left: 4px;
    }

    .combo {
        position: relative;
        box-sizing: border-box;
        height: 23px;
        margin-right: 2px;
        border: 1px solid #ababab;
        background: #fff;
    }

    .combo::after {
        content: '';
        position: absolute;
        top: 9px;
        right: 4px;
        border: 3px solid transparent;
        border-top-color: #666;
    }

    .combo.name {
        width: 111px;
    }

    .combo.size {
        width: 43px;
    }

    .combo select {
        appearance: none;
        width: 100%;
        height: 21px;
        padding: 0 10px 0 2px;
        border: 0;
        background: none;
        color: #262626;
        font: inherit;
    }

    .case {
        font-size: 13px;
    }

    .bold {
        font-weight: 700;
    }

    .tool.bold {
        width: 22px;
    }

    .italic {
        font: italic 700 14px 'Liberation Serif', serif;
    }

    .under {
        font-weight: 700;
        text-decoration: underline;
    }

    .strike {
        font-size: 10px;
        text-decoration: line-through;
    }

    .script {
        font-weight: 700;
    }

    .script sub,
    .script sup {
        color: #3a77ba;
        font-size: 7px;
    }

    .script sub {
        padding-top: 6px;
    }

    .script sup {
        padding-bottom: 6px;
    }

    .gallery {
        display: flex;
        box-sizing: border-box;
        height: 60px;
        margin: 2px 10px 0 9px;
        border: 1px solid #c8c8c8;
        background: #fff;
    }

    .style {
        flex: 1 1 0;
        flex-direction: column;
        box-sizing: border-box;
        min-width: 0;
        margin: 1px 0;
        padding-top: 4px;
    }

    .style.picked {
        border: 1px solid #8a8a8a;
        box-shadow: inset 0 0 0 3px #cdcdc9;
        padding-top: 2px;
    }

    .sample {
        width: 59px;
        height: 28px;
        overflow: hidden;
        color: #000;
        line-height: 28px;
        text-align: left;
    }

    .sample.body {
        font-family: Lato, sans-serif;
        font-size: 13px;
    }

    .sample.h-one,
    .sample.h-two {
        color: #365f91;
        font-family: 'Liberation Serif', serif;
        font-size: 20px;
    }

    .sample.h-two {
        font-size: 17px;
    }

    .sample.title {
        font: 32px/22px 'Liberation Serif', serif;
    }

    .style-name {
        color: #555;
        line-height: 22px;
    }

    .more {
        width: 24px;
        margin: -1px;
        border: 1px solid #8a8a8a;
        background: #f3f3f3;
    }

    .addin {
        flex-direction: column;
        gap: 15px;
        padding-top: 12px;
    }

    .dot {
        width: 10px;
        height: 10px;
        border-radius: 50%;
        background: #ff9300;
    }

    .collapse {
        align-self: flex-end;
        margin: 0 8px 4px auto;
    }

    .workspace {
        display: grid;
        grid-template-columns: 22px 1fr 16px;
        flex: 1;
        min-height: 0;
        overflow: hidden;
    }

    .left-rail {
        display: flex;
        flex-direction: column;
        align-items: flex-start;
        overflow: hidden;
    }

    .tab-stop {
        box-sizing: border-box;
        width: 22px;
        height: 21px;
        border: 3px solid #d4d4d4;
        background: #fff;
    }

    .v-ruler {
        margin: 6px 0 0 5px;
    }

    .v-ruler text,
    .h-ruler text {
        fill: #444;
        font-size: 10px;
    }

    .canvas {
        display: flex;
        flex-direction: column;
        align-items: center;
        min-width: 0;
        overflow: hidden;
    }

    .h-ruler {
        margin: 2px 2px 0 0;
    }

    .page {
        box-sizing: border-box;
        width: 770px;
        flex: none;
        margin-top: 6px;
        padding-bottom: 36px;
        border: 1px solid #c6c6c6;
        background: #fff;
        color: #222;
        font: 8px/11px 'Liberation Serif', serif;
    }

    .page.next {
        height: 460px;
        margin-top: 8px;
    }

    h1 {
        box-sizing: border-box;
        width: 376px;
        margin: 11px 0 2px 171px;
        border: 2px solid #fff;
        background: #4f81bd;
        box-shadow: 0 1px 3px #888;
        color: #fff;
        font-size: 16px;
        line-height: 27px;
        text-align: center;
    }

    .plan {
        width: 100%;
    }

    .plan text {
        white-space: pre;
    }

    .mark {
        fill: #e33;
        font-size: 7px;
    }

    .area,
    .letter {
        font-weight: 700;
        text-anchor: middle;
    }

    .letter {
        fill: #fff;
        font-size: 11px;
    }

    .label {
        fill: #111;
        font: 900 7px Lato, sans-serif;
        text-anchor: middle;
    }

    h2 {
        width: fit-content;
        margin: 5px 0 2px 36px;
        color: #000;
        font-size: 8px;
        line-height: 11px;
        text-decoration: underline double #2a5bd7;
    }

    .legend {
        display: grid;
        grid-template-columns: 165px 193px 192px 1fr;
        padding-left: 36px;
    }

    .legend ul {
        margin: 0;
        padding: 0;
        list-style: none;
    }

    .legend li {
        tab-size: 28px;
        white-space: pre;
    }

    .typo {
        text-decoration: underline wavy #e81123 1px;
        text-decoration-skip-ink: none;
        text-underline-offset: 0;
    }

    .grammar {
        text-decoration: underline double #2a5bd7 1px;
        text-decoration-skip-ink: none;
        text-underline-offset: 0;
    }

    .scrollbar {
        display: flex;
        flex-direction: column;
        gap: 3px;
        padding: 26px 2px 2px 0;
    }

    .scrollbar button {
        box-sizing: border-box;
        height: 15px;
        border: 1px solid #ababab;
        background: #fff;
    }

    .thumb {
        flex: 1;
        margin-bottom: 22px;
        border: 1px solid #ababab;
        background: #fff;
    }

    .status {
        display: flex;
        align-items: center;
        box-sizing: border-box;
        height: 22px;
        flex: none;
        padding: 0 14px 0 11px;
        border-top: 1px solid #c6c6c6;
        background: #f3f3f3;
        font-size: 11px;
        gap: 20px;
    }

    .dim {
        color: #444;
    }

    .access {
        gap: 1px;
        font-weight: 600;
    }

    .views {
        display: flex;
        align-self: stretch;
        margin-left: auto;
    }

    .views button {
        width: 40px;
    }

    .views .on {
        background: #c6c6c6;
    }

    .zoom {
        display: flex;
        align-items: center;
        gap: 4px;
        margin-left: -16px;
    }

    .step {
        width: 11px;
        height: 16px;
    }

    .percent {
        margin-left: 7px;
    }

    .zoom input {
        appearance: none;
        width: 100px;
        height: 11px;
        margin: 0;
        background:
            linear-gradient(#333, #333) center / 1px 5px no-repeat,
            linear-gradient(#333, #333) center / 100% 1px no-repeat;
    }

    .zoom input::-webkit-slider-thumb {
        appearance: none;
        width: 5px;
        height: 11px;
        background: #444;
    }

    .taskbar {
        display: flex;
        height: 40px;
        flex: none;
        background: linear-gradient(90deg, #262626, #262626 25%, #35332f 39%, #272727 52%, #2c2c2c);
        color: #fff;
    }

    .start {
        width: 48px;
    }

    .search {
        display: flex;
        align-items: center;
        gap: 11px;
        box-sizing: border-box;
        width: 288px;
        padding-left: 11px;
        border: 1px solid #c0c0c0;
        background: #f2f2f2;
    }

    .search input {
        min-width: 0;
        flex: 1;
        padding: 0;
        border: 0;
        outline: 0;
        background: none;
        font: 15px 'Open Sans', 'Noto Sans', sans-serif;
    }

    .search input::placeholder {
        color: #333;
    }

    .pinned {
        display: flex;
        gap: 1px;
        margin-left: 3px;
    }

    .app {
        box-sizing: border-box;
        width: 48px;
        padding-top: 2px;
        border-bottom: 2px solid transparent;
    }

    .app.open {
        border-image: linear-gradient(90deg, transparent 4px, #76b9ed 4px 44px, transparent 44px) 2;
    }

    .app.current {
        border-image: none;
        border-bottom-color: #76b9ed;
        background: #525354;
    }

    .tray {
        display: flex;
        gap: 11px;
        margin-left: auto;
        padding-right: 17px;
    }

    .weather {
        gap: 8px;
        margin-right: 13px;
        font-size: 13px;
    }

    .clock {
        flex-direction: column;
        width: 50px;
        margin-right: 6px;
        line-height: 18px;
    }

    .alerts {
        padding-top: 5px;
    }
</style>
